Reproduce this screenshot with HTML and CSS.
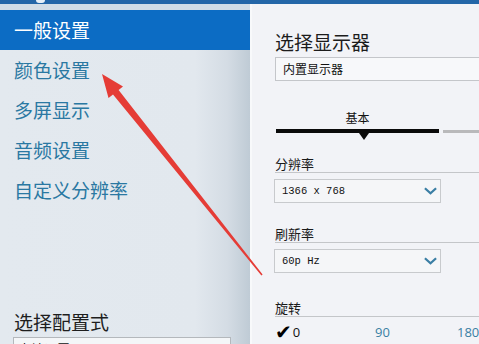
FILE: index.html
```html
<!DOCTYPE html>
<html lang="zh-CN">
<head>
<meta charset="utf-8">
<link rel="stylesheet" href="styles.css">
</head>
<body>
<div class="screen">
  <div class="topbar"><span class="top-icon"></span></div>
  <div class="app">
    <aside class="sidebar">
      <div class="sidebar-gap"></div>
      <ul class="menu">
        <li class="menu-item active">一般设置</li>
        <li class="menu-item">颜色设置</li>
        <li class="menu-item">多屏显示</li>
        <li class="menu-item">音频设置</li>
        <li class="menu-item">自定义分辨率</li>
      </ul>
      <div class="profile">
        <h3 class="profile-title">选择配置式</h3>
        <div class="profile-box">本地设置</div>
      </div>
    </aside>
    <main class="panel">
      <h2 class="panel-title">选择显示器</h2>
      <div class="field-input">内置显示器</div>
      <div class="tab-label">基本</div>
      <div class="tab-bar"><span class="tab-on"></span><span class="tab-off"></span></div>
      <div class="section-label first">分辨率</div>
      <div class="select"><span class="select-text">1366 x 768</span><svg class="chev" viewBox="0 0 14 8"><path d="M1 1 L7 6.5 L13 1" fill="none" stroke="#3a7ea4" stroke-width="2.4"/></svg></div>
      <div class="section-label">刷新率</div>
      <div class="select"><span class="select-text">60p Hz</span><svg class="chev" viewBox="0 0 14 8"><path d="M1 1 L7 6.5 L13 1" fill="none" stroke="#3a7ea4" stroke-width="2.4"/></svg></div>
      <div class="section-label rotate">旋转</div>
      <div class="rotate-row">
        <span class="opt checked"><span class="tick">✔</span>0</span>
        <span class="opt">90</span>
        <span class="opt">180</span>
      </div>
    </main>
  </div>
  <svg class="arrow" viewBox="0 0 479 344" width="479" height="344">
    <polygon points="102,74 123,86.5 118.6,90 262.6,274.5 261.4,275.5 113,94.5 108.5,98" fill="#e53c36"/>
  </svg>
</div>
</body>
</html>
```
FILE: styles.css
```css
* { box-sizing: border-box; }
html, body { margin: 0; padding: 0; }
body {
  width: 479px;
  height: 344px;
  overflow: hidden;
  font-family: "Noto Sans CJK SC", "Noto Sans", sans-serif;
}
.screen {
  position: relative;
  width: 479px;
  height: 344px;
  overflow: hidden;
  display: flex;
  flex-direction: column;
}
.topbar {
  height: 4px;
  background: #2466a8;
  flex: none;
  display: flex;
}
.top-icon {
  margin-left: 36px;
  width: 9px;
  height: 3px;
  background: #e8f0f8;
  border-radius: 0 0 3px 3px;
}
.app {
  flex: 1;
  display: grid;
  grid-template-columns: 250px 1fr;
  min-height: 0;
}
.sidebar {
  background: linear-gradient(90deg, #e3e9ef 0%, #e2e8ee 78%, #d4dce4 91%, #bfcbd5 100%);
  display: flex;
  flex-direction: column;
  overflow: hidden;
}
.sidebar > * { flex: none; }
.sidebar-gap {
  height: 6px;
  background: #d3dde7;
}
.menu {
  list-style: none;
  margin: 0;
  padding: 0;
}
.menu-item {
  height: 40px;
  line-height: 40px;
  padding-left: 14px;
  font-size: 19px;
  color: #2a78a2;
}
.menu-item.active {
  background: #0c6cc4;
  color: #ffffff;
}
.profile {
  margin-top: 100px;
}
.profile-title {
  margin: 0;
  padding-left: 14px;
  font-size: 19px;
  font-weight: 400;
  line-height: 24px;
  color: #1e1e1e;
}
.profile-box {
  margin: 3px 0 0 13px;
  width: 218px;
  height: 24px;
  border: 1px solid #b4b8bc;
  background: #f4f6f8;
  font-size: 13px;
  line-height: 22px;
  padding-left: 4px;
  color: #111;
}
.panel {
  background: #f2f3f7;
  border-left: 2px solid #f8f9fb;
  padding-left: 23px;
  padding-top: 26px;
  overflow: hidden;
}
.panel-title {
  margin: 0;
  font-size: 19px;
  font-weight: 400;
  line-height: 24px;
  color: #1c1c1c;
}
.field-input {
  margin-top: 3px;
  width: 230px;
  height: 24px;
  border: 1px solid #c4c6ca;
  background: #f7f8fa;
  font-size: 12px;
  line-height: 22px;
  padding-left: 7px;
  color: #111;
}
.tab-label {
  margin-top: 29px;
  width: 165px;
  text-align: center;
  font-size: 12px;
  line-height: 16px;
  color: #111;
}
.tab-bar {
  margin-top: 3px;
  display: flex;
  align-items: flex-end;
  gap: 4px;
  height: 4px;
}
.tab-on {
  position: relative;
  width: 163px;
  height: 4px;
  background: #0a0a0a;
  margin-left: 1px;
}
.tab-on::after {
  content: "";
  position: absolute;
  left: 83px;
  top: 4px;
  border-left: 5px solid transparent;
  border-right: 5px solid transparent;
  border-top: 7px solid #0a0a0a;
}
.tab-off {
  flex: 1;
  height: 3px;
  background: #b9b9bb;
}
.section-label {
  margin-top: 23px;
  font-size: 13px;
  line-height: 16px;
  color: #1a1a1a;
  border-bottom: 1.5px solid #c4c6c9;
}
.section-label.rotate { margin-top: 27px; }
.select {
  margin-top: 6px;
  width: 167px;
  margin-left: -1px;
  height: 24px;
  border: 1px solid #c8cacd;
  background: #f5f6f8;
  display: flex;
  align-items: center;
  justify-content: space-between;
  padding: 0 3px 0 7px;
}
.select-text {
  font-family: "Liberation Mono", "DejaVu Sans Mono", monospace;
  font-size: 10.5px;
  color: #111;
}
.chev {
  width: 13px;
  height: 8px;
}
.rotate-row {
  margin-top: 7px;
  display: flex;
  align-items: center;
  height: 16px;
  font-family: "Open Sans", "Noto Sans", sans-serif;
  font-size: 13px;
  color: #3a7fa3;
}
.opt { flex: none; }
.opt.checked { width: 100px; color: #111; display: flex; align-items: center; }
.opt:nth-child(2) { width: 82px; }
.tick {
  font-family: "DejaVu Sans", sans-serif;
  font-size: 20px;
  line-height: 16px;
  color: #000;
  margin-right: 1px;
}
.arrow {
  position: absolute;
  left: 0;
  top: 0;
  pointer-events: none;
}
```
